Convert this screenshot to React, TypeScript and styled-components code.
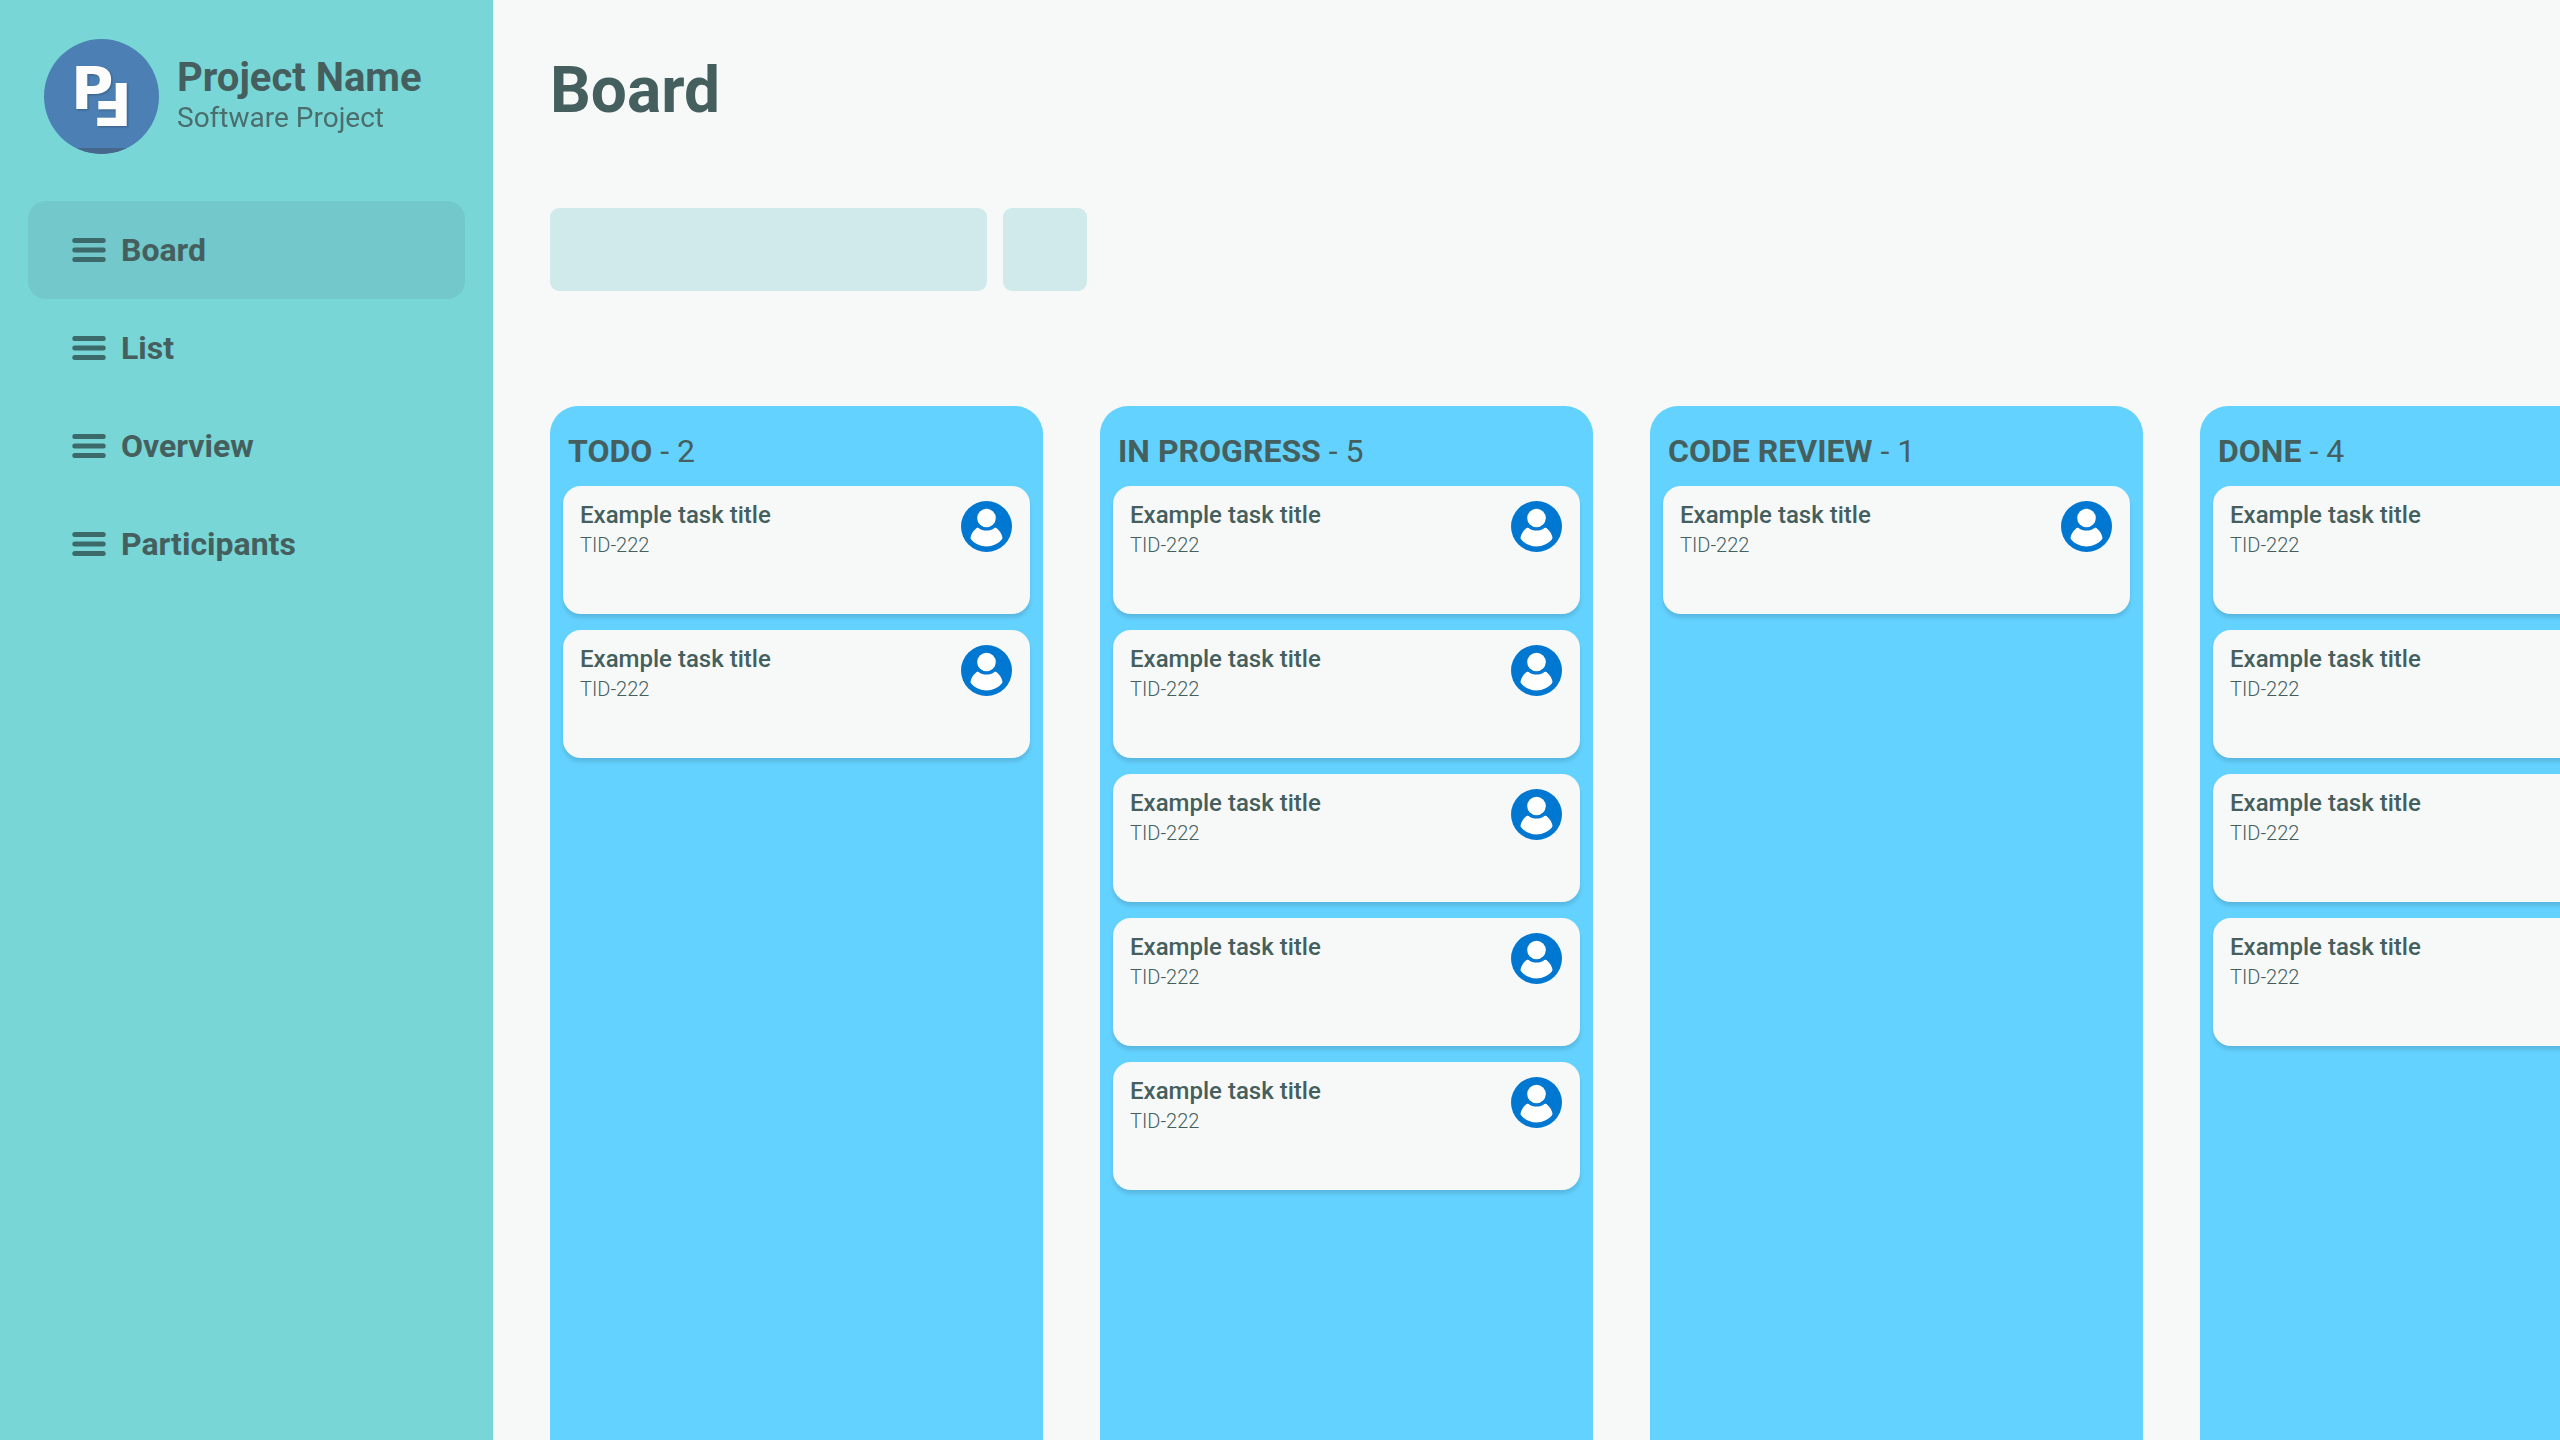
import React from "react";
import styled, { createGlobalStyle } from "styled-components";

const color = {
  page: "#f7f9f8",
  sidebar: "#78d6d7",
  active: "#73c8cb",
  text: "#455f5e",
  icon: "#3c6a6b",
  field: "#d0eaeb",
  column: "#64d2ff",
  avatar: "#0077d0",
};

const GlobalStyle = createGlobalStyle`
  *, *::before, *::after { box-sizing: border-box; }
  body {
    margin: 0;
    background: ${color.page};
    color: ${color.text};
    font-family: Roboto, "Liberation Sans", sans-serif;
  }
`;

const Layout = styled.div`
  display: flex;
  height: 100vh;
  overflow: hidden;
`;

const Sidebar = styled.aside`
  flex: none;
  width: 493px;
  padding: 39px 28px;
  background: ${color.sidebar};
`;

const ProjectHeader = styled.header`
  display: flex;
  align-items: center;
  gap: 18px;
  padding-left: 16px;
  margin-bottom: 47px;
`;

const ProjectText = styled.div`
  padding-bottom: 6px;
`;

const ProjectName = styled.div`
  font-size: 40px;
  line-height: 48px;
  font-weight: 700;
`;

const ProjectKind = styled.div`
  font-size: 28px;
  line-height: 32px;
  opacity: 0.88;
`;

const NavList = styled.ul`
  list-style: none;
  margin: 0;
  padding: 0;
`;

const NavLink = styled.a<{ $active?: boolean }>`
  display: flex;
  align-items: center;
  gap: 15px;
  height: 98px;
  padding: 0 44px;
  border-radius: 18px;
  background: ${(p) => (p.$active ? color.active : "transparent")};
  color: inherit;
  font-size: 32px;
  line-height: 40px;
  font-weight: 700;
  text-decoration: none;
`;

const Main = styled.main`
  flex: 1;
  min-width: 0;
  display: flex;
  flex-direction: column;
  padding: 53px 0 0 57px;
  overflow: hidden;
`;

const Title = styled.h1`
  margin: 0 0 79px;
  font-size: 64px;
  line-height: 76px;
  font-weight: 700;
`;

const Toolbar = styled.form`
  display: flex;
  gap: 16px;
  margin-bottom: 115px;
`;

const SearchInput = styled.input`
  width: 437px;
  height: 83px;
  padding: 0 24px;
  border: 0;
  border-radius: 9px;
  background: ${color.field};
  color: inherit;
  font: inherit;
  font-size: 28px;
`;

const FilterButton = styled.button`
  width: 84px;
  height: 83px;
  border: 0;
  border-radius: 9px;
  background: ${color.field};
`;

const Columns = styled.div`
  flex: 1;
  display: flex;
  gap: 57px;
`;

const ColumnBox = styled.section`
  flex: none;
  width: 493px;
  padding: 25px 13px 0;
  border-radius: 28px 28px 0 0;
  background: ${color.column};
`;

const ColumnTitle = styled.h2`
  margin: 0 0 15px;
  padding-left: 5px;
  font-size: 32px;
  line-height: 40px;
  font-weight: 700;
`;

const Count = styled.span`
  font-weight: 400;
`;

const CardList = styled.div`
  display: grid;
  gap: 16px;
`;

const CardBox = styled.article`
  display: flex;
  justify-content: space-between;
  align-items: flex-start;
  min-height: 128px;
  padding: 15px 18px 15px 17px;
  border-radius: 18px;
  background: ${color.page};
  box-shadow: 0 4px 4px rgba(0, 0, 0, 0.12);
`;

const CardTitle = styled.h3`
  margin: 0;
  font-size: 24px;
  line-height: 28px;
  font-weight: 500;
`;

const CardId = styled.div`
  font-size: 20px;
  line-height: 32px;
  font-weight: 300;
`;

const LogoLetter = styled.text`
  font-family: "DejaVu Sans", sans-serif;
  font-size: 58px;
  font-weight: 700;
  fill: #fdfdfd;
`;

const LogoSvg = styled.svg`
  flex: none;
`;

const LogoMark = styled.g`
  filter: drop-shadow(1px 1px 1px rgba(0, 0, 0, 0.25));
`;

function Logo() {
  return (
    <LogoSvg width="115" height="115" viewBox="0 0 115 115" role="img" aria-label="Project logo">
      <defs>
        <clipPath id="logo-disc">
          <circle cx="57.5" cy="57.5" r="57.5" />
        </clipPath>
      </defs>
      <g clipPath="url(#logo-disc)">
        <rect width="115" height="115" fill="#4c7fb3" />
        <rect y="109" width="115" height="6" fill="#46688c" />
      </g>
      <LogoMark>
        <LogoLetter x="27" y="70">P</LogoLetter>
        <LogoLetter transform="translate(88 44) rotate(180)">F</LogoLetter>
      </LogoMark>
    </LogoSvg>
  );
}

function MenuIcon() {
  return (
    <svg width="34" height="24" viewBox="0 0 34 24" fill={color.icon} aria-hidden="true">
      <rect x="0.3" width="33.4" height="5" rx="2.5" />
      <rect x="0.3" y="9.5" width="33.4" height="5" rx="2.5" />
      <rect x="0.3" y="19" width="33.4" height="5" rx="2.5" />
    </svg>
  );
}

function Avatar() {
  return (
    <svg width="51" height="51" viewBox="0 0 51 51" role="img" aria-label="Assignee">
      <circle cx="25.5" cy="25.5" r="25.5" fill={color.avatar} />
      <circle cx="25.5" cy="17" r="9.3" fill="#fff" />
      <path
        d="M17.6 26.9C22 30.4 29 30.4 33.4 26.9C34 26.5 34.8 26.6 35.4 27.1C38.4 29.4 40.6 32.7 41.4 36.2C41.6 37.1 41.4 37.8 40.8 38.5C37.2 42.8 31.6 45.4 25.5 45.4C19.4 45.4 13.8 42.8 10.2 38.5C9.6 37.8 9.4 37.1 9.6 36.2C10.4 32.7 12.6 29.4 15.6 27.1C16.2 26.6 17 26.5 17.6 26.9Z"
        fill="#fff"
      />
    </svg>
  );
}

const navItems = ["Board", "List", "Overview", "Participants"];

const columns = [
  { name: "TODO", count: 2 },
  { name: "IN PROGRESS", count: 5 },
  { name: "CODE REVIEW", count: 1 },
  { name: "DONE", count: 4 },
];

function TaskCard() {
  return (
    <CardBox>
      <div>
        <CardTitle>Example task title</CardTitle>
        <CardId>TID-222</CardId>
      </div>
      <Avatar />
    </CardBox>
  );
}

function Column({ name, count }: { name: string; count: number }) {
  return (
    <ColumnBox>
      <ColumnTitle>
        {name} <Count>- {count}</Count>
      </ColumnTitle>
      <CardList>
        {Array.from({ length: count }, (_, i) => (
          <TaskCard key={i} />
        ))}
      </CardList>
    </ColumnBox>
  );
}

export default function App() {
  return (
    <>
      <GlobalStyle />
      <Layout>
        <Sidebar>
          <ProjectHeader>
            <Logo />
            <ProjectText>
              <ProjectName>Project Name</ProjectName>
              <ProjectKind>Software Project</ProjectKind>
            </ProjectText>
          </ProjectHeader>
          <nav>
            <NavList>
              {navItems.map((item, i) => (
                <li key={item}>
                  <NavLink
                    href={`#${item.toLowerCase()}`}
                    $active={i === 0}
                    aria-current={i === 0 ? "page" : undefined}
                  >
                    <MenuIcon />
                    {item}
                  </NavLink>
                </li>
              ))}
            </NavList>
          </nav>
        </Sidebar>
        <Main>
          <Title>Board</Title>
          <Toolbar>
            <SearchInput type="search" aria-label="Search tasks" />
            <FilterButton type="button" aria-label="Filter" />
          </Toolbar>
          <Columns>
            {columns.map((c) => (
              <Column key={c.name} {...c} />
            ))}
          </Columns>
        </Main>
      </Layout>
    </>
  );
}
